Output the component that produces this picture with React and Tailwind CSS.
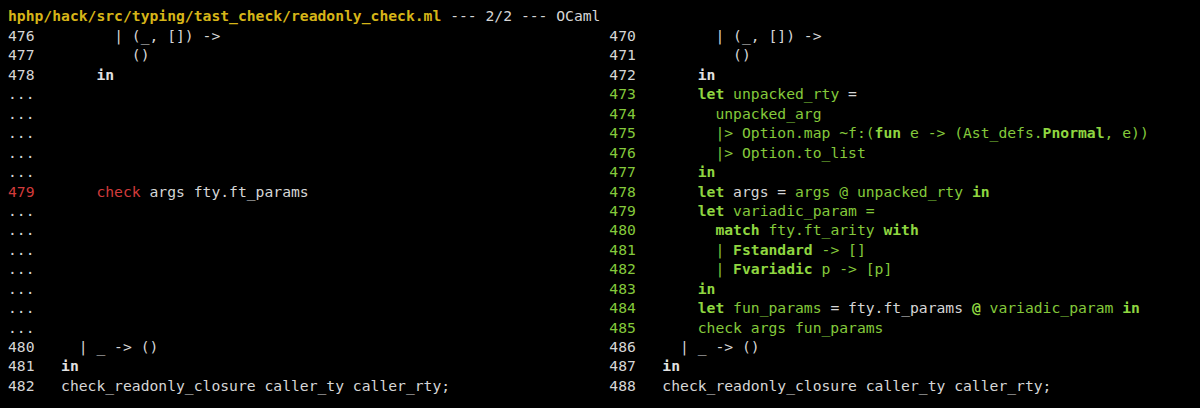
import React from "react";

// segments: [text, kind] ; kind: n = normal grey, g = green, G = bold green, r = red, b = bold grey
const G = "text-[#8fd640] font-bold";
const g = "text-[#84c93b]";
const n = "text-[#d6d6d6]";
const b = "text-[#e2e2e2] font-bold";
const r = "text-[#d23b3b]";

const cls = { G, g, n, b, r };

const left = [
  { num: "476", c: n, indent: 8, segs: [["| (_, []) ->", "n"]] },
  { num: "477", c: n, indent: 10, segs: [["()", "n"]] },
  { num: "478", c: n, indent: 6, segs: [["in", "b"]] },
  { dots: true },
  { dots: true },
  { dots: true },
  { dots: true },
  { dots: true },
  { num: "479", c: r, indent: 6, segs: [["check", "r"], [" args fty.ft_params", "n"]] },
  { dots: true },
  { dots: true },
  { dots: true },
  { dots: true },
  { dots: true },
  { dots: true },
  { dots: true },
  { num: "480", c: n, indent: 4, segs: [["| _ -> ()", "n"]] },
  { num: "481", c: n, indent: 2, segs: [["in", "b"]] },
  { num: "482", c: n, indent: 2, segs: [["check_readonly_closure caller_ty caller_rty;", "n"]] },
];

const right = [
  { num: "470", c: n, indent: 8, segs: [["| (_, []) ->", "n"]] },
  { num: "471", c: n, indent: 10, segs: [["()", "n"]] },
  { num: "472", c: n, indent: 6, segs: [["in", "b"]] },
  { num: "473", c: g, indent: 6, segs: [["let", "G"], [" unpacked_rty", "g"], [" =", "n"]] },
  { num: "474", c: g, indent: 8, segs: [["unpacked_arg", "g"]] },
  {
    num: "475",
    c: g,
    indent: 8,
    segs: [
      ["|> Option.map ~f:(", "g"],
      ["fun", "G"],
      [" e -> (Ast_defs.", "g"],
      ["Pnormal", "G"],
      [", e))", "g"],
    ],
  },
  { num: "476", c: g, indent: 8, segs: [["|> Option.to_list", "g"]] },
  { num: "477", c: g, indent: 6, segs: [["in", "G"]] },
  {
    num: "478",
    c: g,
    indent: 6,
    segs: [["let", "G"], [" args = ", "n"], ["args @ unpacked_rty ", "g"], ["in", "G"]],
  },
  { num: "479", c: g, indent: 6, segs: [["let", "G"], [" variadic_param =", "g"]] },
  { num: "480", c: g, indent: 8, segs: [["match", "G"], [" fty.ft_arity ", "g"], ["with", "G"]] },
  { num: "481", c: g, indent: 8, segs: [["| ", "g"], ["Fstandard", "G"], [" -> []", "g"]] },
  { num: "482", c: g, indent: 8, segs: [["| ", "g"], ["Fvariadic", "G"], [" p -> [p]", "g"]] },
  { num: "483", c: g, indent: 6, segs: [["in", "G"]] },
  {
    num: "484",
    c: g,
    indent: 6,
    segs: [
      ["let", "G"],
      [" fun_params", "g"],
      [" = fty.ft_params ", "n"],
      ["@", "G"],
      [" variadic_param ", "g"],
      ["in", "G"],
    ],
  },
  { num: "485", c: g, indent: 6, segs: [["check args fun_params", "g"]] },
  { num: "486", c: n, indent: 4, segs: [["| _ -> ()", "n"]] },
  { num: "487", c: n, indent: 2, segs: [["in", "b"]] },
  { num: "488", c: n, indent: 2, segs: [["check_readonly_closure caller_ty caller_rty;", "n"]] },
];

function Row({ row }) {
  if (row.dots) {
    return <div className="h-[19.44px] text-[#d6d6d6]">...</div>;
  }
  return (
    <div className="h-[19.44px] whitespace-pre">
      <span className={row.c}>{row.num}</span>
      <span>{" ".repeat(1 + row.indent)}</span>
      {row.segs.map(([t, k], i) => (
        <span key={i} className={cls[k]}>
          {t}
        </span>
      ))}
    </div>
  );
}

export default function App() {
  return (
    <div
      className="w-[1200px] h-[408px] bg-black overflow-hidden pl-[8px] pt-[5px] text-[14.7px] leading-[19.44px] text-[#d6d6d6]"
      style={{ fontFamily: '"DejaVu Sans Mono", monospace' }}
    >
      <div className="h-[21px] leading-[21px] whitespace-pre">
        <span className="text-[#d6b518] font-bold">hphp/hack/src/typing/tast_check/readonly_check.ml</span>
        <span> --- 2/2 --- OCaml</span>
      </div>
      <div className="flex">
        <div className="w-[68ch] shrink-0">
          {left.map((row, i) => (
            <Row key={i} row={row} />
          ))}
        </div>
        <div>
          {right.map((row, i) => (
            <Row key={i} row={row} />
          ))}
        </div>
      </div>
    </div>
  );
}
